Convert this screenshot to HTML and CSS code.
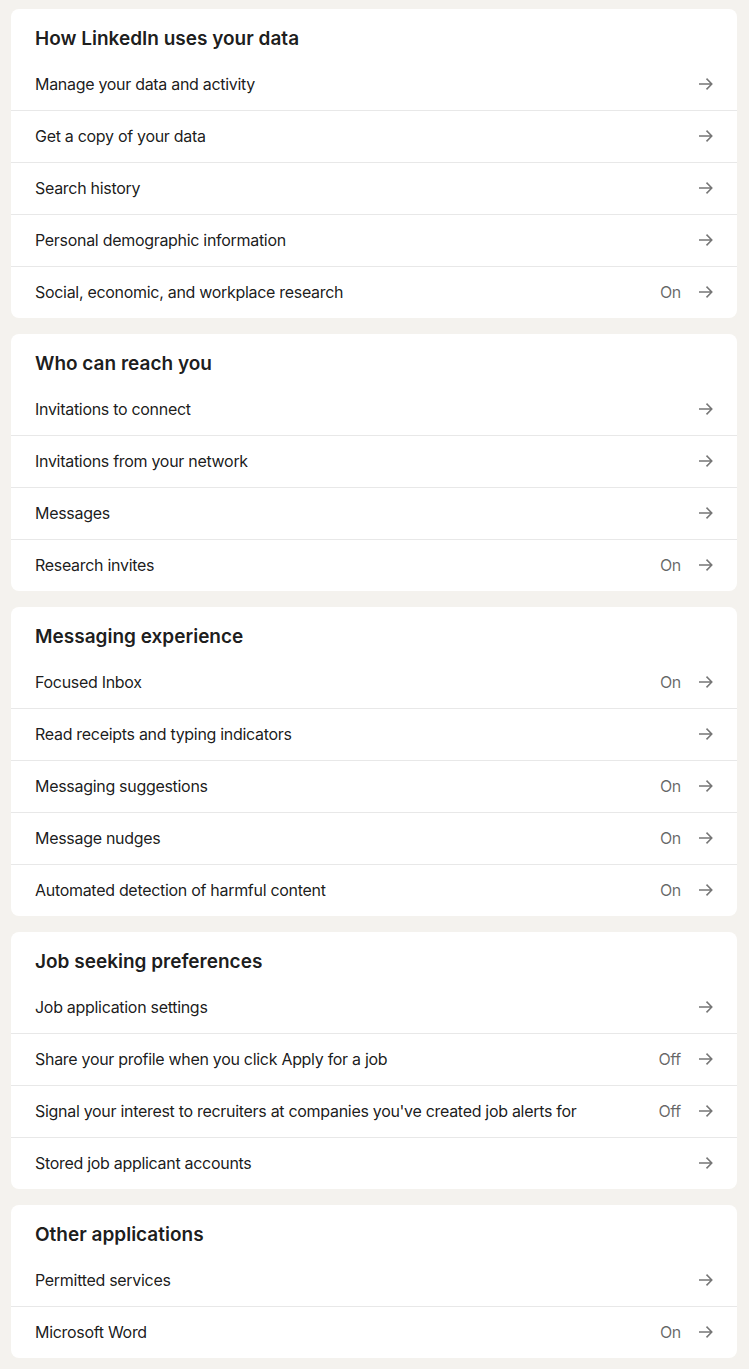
FILE: index.html
```html
<!DOCTYPE html>
<html lang="en">
<head>
<meta charset="utf-8">
<title>Data privacy</title>
<link rel="stylesheet" href="styles.css">
</head>
<body>
<svg width="0" height="0" class="defs" aria-hidden="true">
  <symbol id="arrow" viewBox="0 0 16 16">
    <path d="M2 8h12.6M9.5 2.6 14.8 8l-5.3 5.4" fill="none" stroke="currentColor" stroke-width="1.5" stroke-linecap="butt" stroke-linejoin="miter"/>
  </symbol>
</svg>
<main class="page">
  <section class="card">
    <h2 class="card-title">How LinkedIn uses your data</h2>
    <a class="row"><span class="label">Manage your data and activity</span><span class="meta"><svg class="arrow"><use href="#arrow"/></svg></span></a>
    <a class="row"><span class="label">Get a copy of your data</span><span class="meta"><svg class="arrow"><use href="#arrow"/></svg></span></a>
    <a class="row"><span class="label">Search history</span><span class="meta"><svg class="arrow"><use href="#arrow"/></svg></span></a>
    <a class="row"><span class="label">Personal demographic information</span><span class="meta"><svg class="arrow"><use href="#arrow"/></svg></span></a>
    <a class="row"><span class="label">Social, economic, and workplace research</span><span class="meta"><span class="state">On</span><svg class="arrow"><use href="#arrow"/></svg></span></a>
  </section>
  <section class="card">
    <h2 class="card-title">Who can reach you</h2>
    <a class="row"><span class="label">Invitations to connect</span><span class="meta"><svg class="arrow"><use href="#arrow"/></svg></span></a>
    <a class="row"><span class="label">Invitations from your network</span><span class="meta"><svg class="arrow"><use href="#arrow"/></svg></span></a>
    <a class="row"><span class="label">Messages</span><span class="meta"><svg class="arrow"><use href="#arrow"/></svg></span></a>
    <a class="row"><span class="label">Research invites</span><span class="meta"><span class="state">On</span><svg class="arrow"><use href="#arrow"/></svg></span></a>
  </section>
  <section class="card">
    <h2 class="card-title">Messaging experience</h2>
    <a class="row"><span class="label">Focused Inbox</span><span class="meta"><span class="state">On</span><svg class="arrow"><use href="#arrow"/></svg></span></a>
    <a class="row"><span class="label">Read receipts and typing indicators</span><span class="meta"><svg class="arrow"><use href="#arrow"/></svg></span></a>
    <a class="row"><span class="label">Messaging suggestions</span><span class="meta"><span class="state">On</span><svg class="arrow"><use href="#arrow"/></svg></span></a>
    <a class="row"><span class="label">Message nudges</span><span class="meta"><span class="state">On</span><svg class="arrow"><use href="#arrow"/></svg></span></a>
    <a class="row"><span class="label">Automated detection of harmful content</span><span class="meta"><span class="state">On</span><svg class="arrow"><use href="#arrow"/></svg></span></a>
  </section>
  <section class="card">
    <h2 class="card-title">Job seeking preferences</h2>
    <a class="row"><span class="label">Job application settings</span><span class="meta"><svg class="arrow"><use href="#arrow"/></svg></span></a>
    <a class="row"><span class="label">Share your profile when you click Apply for a job</span><span class="meta"><span class="state">Off</span><svg class="arrow"><use href="#arrow"/></svg></span></a>
    <a class="row"><span class="label">Signal your interest to recruiters at companies you've created job alerts for</span><span class="meta"><span class="state">Off</span><svg class="arrow"><use href="#arrow"/></svg></span></a>
    <a class="row"><span class="label">Stored job applicant accounts</span><span class="meta"><svg class="arrow"><use href="#arrow"/></svg></span></a>
  </section>
  <section class="card">
    <h2 class="card-title">Other applications</h2>
    <a class="row"><span class="label">Permitted services</span><span class="meta"><svg class="arrow"><use href="#arrow"/></svg></span></a>
    <a class="row"><span class="label">Microsoft Word</span><span class="meta"><span class="state">On</span><svg class="arrow"><use href="#arrow"/></svg></span></a>
  </section>
</main>
</body>
</html>
```
FILE: styles.css
```css
html, body {
  margin: 0;
  padding: 0;
  background: #f4f2ee;
}
body {
  font-family: Inter, "Noto Sans", "Liberation Sans", sans-serif;
  color: rgba(0, 0, 0, 0.9);
  -webkit-font-smoothing: antialiased;
}
.defs {
  position: absolute;
  width: 0;
  height: 0;
  overflow: hidden;
}
.page {
  display: flex;
  flex-direction: column;
  gap: 16px;
  padding: 9px 12px 12px 11px;
}
.card {
  background: #ffffff;
  border-radius: 8px;
  overflow: hidden;
}
.card-title {
  margin: 0;
  padding: 18px 24px 7px;
  font-size: 19px;
  line-height: 24px;
  font-weight: 600;
  color: rgba(0, 0, 0, 0.9);
}
.row {
  display: flex;
  align-items: center;
  justify-content: space-between;
  height: 52px;
  box-sizing: border-box;
  padding: 0 24px 1px;
  font-size: 16px;
  line-height: 20px;
  letter-spacing: -0.3px;
  color: rgba(0, 0, 0, 0.9);
  text-decoration: none;
}
.row + .row {
  border-top: 1px solid #e8e8e8;
}
.meta {
  display: flex;
  align-items: center;
  gap: 16px;
  flex-shrink: 0;
}
.state {
  color: rgba(0, 0, 0, 0.6);
  font-size: 16px;
}
.arrow {
  width: 16px;
  height: 16px;
  color: #767676;
  display: block;
}
```
